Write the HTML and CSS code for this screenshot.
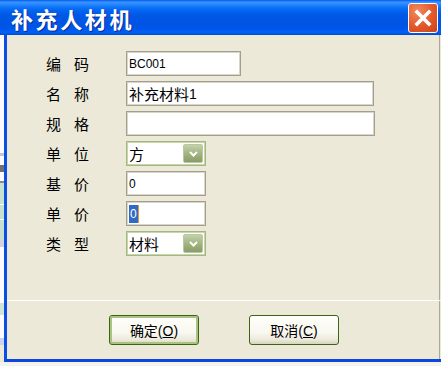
FILE: index.html
```html
<!DOCTYPE html>
<html lang="zh-CN">
<head>
  <meta charset="UTF-8">
  <title>补充人材机</title>
  <link rel="stylesheet" href="styles.css">
</head>
<body>
  <div class="titlebar">
    <span class="title">补充人材机</span>
    <span class="close">
      <svg width="18" height="18" viewBox="0 0 18 18"><path d="M3 3L15 15M15 3L3 15" stroke="#fff" stroke-width="3.6" stroke-linecap="square"/></svg>
    </span>
  </div>

  <div class="frame">
    <div class="behind"></div>
    <div class="dialog">
      <div class="form">
        <div class="row">
          <span class="label">编码</span>
          <div class="field w-code">BC001</div>
        </div>
        <div class="row">
          <span class="label">名称</span>
          <div class="field w-long"><span class="zh">补充材料</span><span class="num">1</span></div>
        </div>
        <div class="row">
          <span class="label">规格</span>
          <div class="field w-long2"></div>
        </div>
        <div class="row">
          <span class="label">单位</span>
          <div class="combo">
            <span class="zh">方</span>
            <span class="drop"><svg width="9" height="6" viewBox="0 0 9 6"><path d="M1 1L4.5 4.5L8 1" stroke="#fff" stroke-width="2" fill="none"/></svg></span>
          </div>
        </div>
        <div class="row">
          <span class="label">基价</span>
          <div class="field w-short">0</div>
        </div>
        <div class="row">
          <span class="label">单价</span>
          <div class="field w-short"><span class="selected">0</span></div>
        </div>
        <div class="row">
          <span class="label">类型</span>
          <div class="combo">
            <span class="zh">材料</span>
            <span class="drop"><svg width="9" height="6" viewBox="0 0 9 6"><path d="M1 1L4.5 4.5L8 1" stroke="#fff" stroke-width="2" fill="none"/></svg></span>
          </div>
        </div>
      </div>

      <div class="footer">
        <button class="btn default">确定(<u>O</u>)</button>
        <button class="btn">取消(<u>C</u>)</button>
      </div>
    </div>
  </div>
</body>
</html>
```

FILE: styles.css
```css
body {
  margin: 0;
  width: 441px;
  height: 366px;
  overflow: hidden;
  background-color: #f3f2ec;
  font-family: "Liberation Sans", "Noto Sans CJK SC", sans-serif;
  color: #000;
}

.titlebar {
  height: 35px;
  box-sizing: border-box;
  display: flex;
  align-items: center;
  justify-content: space-between;
  padding: 0 3px 0 11px;
  background: linear-gradient(to bottom, #0058ee 0, #3a93ff 2px, #2a8bff 4px, #0f76fa 7px, #0466f0 10px, #0058e6 15px, #0054e3 24px, #0056ea 29px, #0060f6 32px, #0057e8 34px, #0046c8 35px);
}

.title {
  color: #fff;
  font-family: "Noto Sans CJK SC", sans-serif;
  font-weight: bold;
  font-size: 22px;
  letter-spacing: 2.6px;
  text-shadow: 1px 1px 0 #0a2a8c;
}

.close {
  width: 30px;
  height: 30px;
  box-sizing: border-box;
  border: 1px solid #fff;
  border-radius: 3px;
  background: radial-gradient(circle at 30% 25%, #f08a5e 0, #e2582a 55%, #c9441a 100%);
  display: flex;
  align-items: center;
  justify-content: center;
}

.frame {
  display: flex;
  height: 327px;
}

.behind {
  width: 4px;
  background: linear-gradient(to bottom,
    #fbfbfb 0, #fbfbfb 118px,
    #bcc6de 118px, #bcc6de 121px,
    #fbfbfb 121px, #fbfbfb 130px,
    #707070 130px, #707070 137px,
    #fbfbfb 137px, #fbfbfb 146px,
    #8a8a8a 146px, #8a8a8a 148px,
    #c6e2cf 148px, #c6e2cf 169px,
    #fff 169px, #fff 170px,
    #c6e2cf 170px, #c6e2cf 184px,
    #fff 184px, #fff 185px,
    #c6e2cf 185px, #c6e2cf 204px,
    #d4d2de 204px, #d4d2de 212px,
    #fbfbfb 212px, #fbfbfb 268px,
    #cfe6d5 268px, #cfe6d5 280px,
    #fbfbfb 280px, #fbfbfb 303px,
    #c8d4f2 303px, #c8d4f2 310px,
    #ece9d8 310px);
}

.dialog {
  flex: 1;
  display: flex;
  flex-direction: column;
  background-color: #ece9d8;
  border-left: 3px solid #0b4ee6;
  border-bottom: 3px solid #0a45dc;
  box-shadow: inset -1px 0 0 #ece9d8, inset -2px 0 0 #aca899;
}

.form {
  height: 265px;
  box-sizing: border-box;
  padding: 16px 0 0 39px;
  display: flex;
  flex-direction: column;
  gap: 5px;
}

.row {
  display: flex;
  align-items: center;
  height: 25px;
}

.label {
  width: 80px;
  font-family: "Noto Sans CJK SC", sans-serif;
  font-size: 15px;
  letter-spacing: 13px;
}

.zh {
  font-family: "Noto Sans CJK SC", sans-serif;
  font-size: 15px;
}

.num {
  font-size: 14px;
}

.field {
  height: 25px;
  box-sizing: border-box;
  display: flex;
  align-items: center;
  padding-left: 2px;
  background-color: #fff;
  border: 1px solid #a29f90;
  box-shadow: inset 0 0 0 1px #d9d6c8;
  font-size: 12px;
}

.w-code { width: 115px; }
.w-long { width: 248px; }
.w-long2 { width: 249px; }
.w-short { width: 80px; }

.selected {
  background-color: #316ac5;
  color: #fff;
  padding: 2px 1px;
  border-right: 1px solid #d89a3a;
}

.combo {
  width: 80px;
  height: 25px;
  box-sizing: border-box;
  display: flex;
  align-items: center;
  padding-left: 2px;
  background-color: #fff;
  border: 1px solid #a2b87f;
  box-shadow: inset 0 0 0 1px #c7d6ae;
}

.drop {
  margin-left: auto;
  margin-right: 2px;
  width: 20px;
  height: 19px;
  box-sizing: border-box;
  display: flex;
  align-items: center;
  justify-content: center;
  border: 1px solid #b9c8a0;
  border-radius: 2px;
  background: linear-gradient(to bottom, #c3d1aa, #9fb27f 55%, #8a9d69);
}

.footer {
  flex: 1;
  border-top: 1px solid #fff;
  display: flex;
  justify-content: center;
  align-items: flex-start;
  gap: 50px;
  padding-top: 14px;
}

.btn {
  width: 90px;
  height: 30px;
  box-sizing: border-box;
  padding: 0;
  border: 1px solid #3d6416;
  border-radius: 3px;
  background: linear-gradient(to bottom, #fffffb 0, #f8f7f0 60%, #ece9dc 85%, #d9d3bd 100%);
  font-family: "Liberation Sans", "Noto Sans CJK SC", sans-serif;
  font-size: 14px;
  color: #000;
}

.btn u {
  text-decoration: underline;
}

.btn.default {
  box-shadow: inset 0 0 0 2px #a8c480;
}
```
